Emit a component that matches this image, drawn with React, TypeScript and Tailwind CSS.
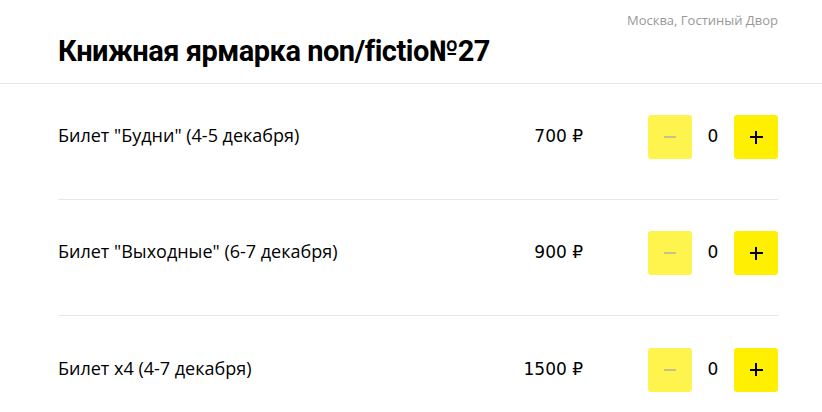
import React from 'react';

const tickets = [
  { name: 'Билет "Будни" (4-5 декабря)', price: '700 ₽' },
  { name: 'Билет "Выходные" (6-7 декабря)', price: '900 ₽' },
  { name: 'Билет x4 (4-7 декабря)', price: '1500 ₽' },
];

export default function App() {
  return (
    <div className="min-h-screen w-[822px] bg-white text-black" style={{ fontFamily: '"Open Sans", sans-serif' }}>
      <header className="h-[84px] border-b border-[#e6e6e6] px-[44px]">
        <div className="flex justify-end pt-[11px] text-[13px] leading-[18px] text-[#999]">
          Москва, Гостиный Двор
        </div>
        <h1 className="pl-[14px] pt-[4px] font-['Roboto',sans-serif] text-[29px] font-bold leading-[36px] tracking-[-0.5px]">
          Книжная ярмарка non/fictio№27
        </h1>
      </header>
      <main className="pl-[58px] pr-[44px]">
        {tickets.map((t, i) => (
          <div
            key={i}
            className={`flex h-[116px] items-center pb-[9px] ${i < tickets.length - 1 ? 'border-b border-[#e6e6e6]' : ''}`}
          >
            <div className="flex-1 pb-[4px] text-[18px] leading-[24px]">{t.name}</div>
            <div className="mr-[65px] pb-[2px] font-['DejaVu_Sans',sans-serif] text-[17px] leading-[22px]">{t.price}</div>
            <div className="flex w-[130px] items-center">
              <button className="flex h-[44px] w-[44px] items-center justify-center rounded-[3px] bg-[#fff34e]">
                <span className="block h-[2px] w-[12px] bg-[#c9c18a]" />
              </button>
              <span className="flex-1 text-center font-['DejaVu_Sans',sans-serif] text-[17px]">0</span>
              <button className="relative flex h-[44px] w-[44px] items-center justify-center rounded-[3px] bg-[#ffef00]">
                <span className="absolute h-[2px] w-[13px] bg-black" />
                <span className="absolute h-[13px] w-[2px] bg-black" />
              </button>
            </div>
          </div>
        ))}
      </main>
    </div>
  );
}
